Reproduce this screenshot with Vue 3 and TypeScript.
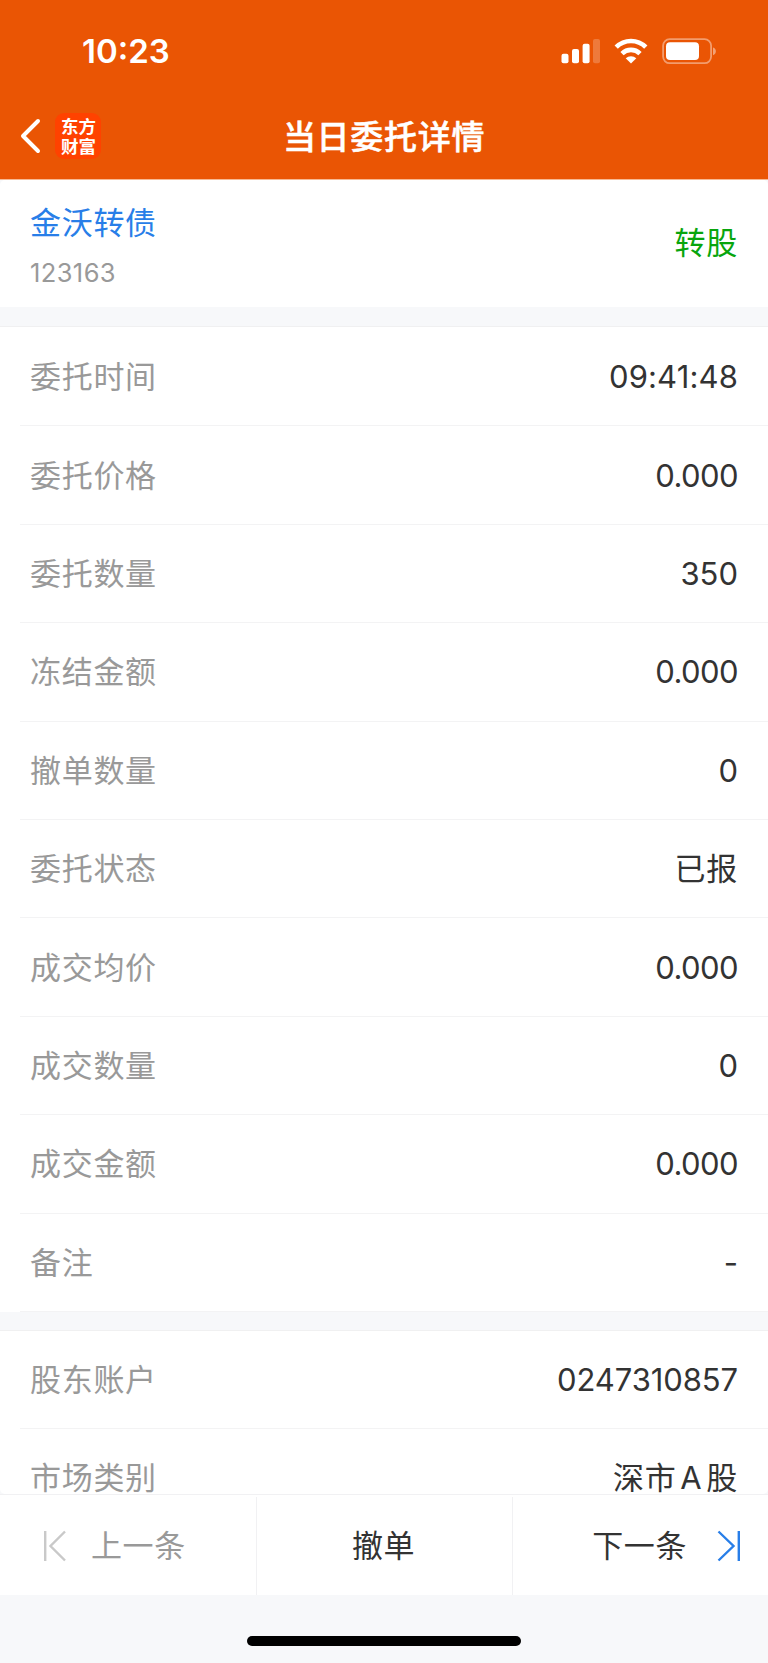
<script setup lang="ts">
interface DetailRow {
  label: string
  value: string
  kind: string
}

const orderRows: DetailRow[] = [
  { label: '委托时间', value: '09:41:48', kind: 'time' },
  { label: '委托价格', value: '0.000', kind: 'decimal' },
  { label: '委托数量', value: '350', kind: 'num' },
  { label: '冻结金额', value: '0.000', kind: 'decimal' },
  { label: '撤单数量', value: '0', kind: 'num' },
  { label: '委托状态', value: '已报', kind: 'cjk' },
  { label: '成交均价', value: '0.000', kind: 'decimal' },
  { label: '成交数量', value: '0', kind: 'num' },
  { label: '成交金额', value: '0.000', kind: 'decimal' },
  { label: '备注', value: '-', kind: 'dash' },
]

const accountRows: DetailRow[] = [
  { label: '股东账户', value: '0247310857', kind: 'account' },
  { label: '市场类别', value: '深市 A 股', kind: 'mixed' },
]
</script>

<template>
  <div class="screen">
    <header class="top">
      <div class="status">
        <span class="clock">10:23</span>
        <svg class="status-icons" width="158" height="30" viewBox="0 0 158 30">
          <g fill="#fff">
            <rect x="1.5" y="18.8" width="7" height="9.4" rx="2" />
            <rect x="12" y="14" width="7" height="14.2" rx="2" />
            <rect x="22.6" y="8.8" width="7" height="19.4" rx="2" />
            <rect x="33" y="4" width="7" height="24.2" rx="2" opacity="0.22" />
          </g>
          <g fill="none" stroke="#fff" stroke-width="4.6">
            <path d="M56.2 12.2a20.8 20.8 0 0 1 29.6 0" />
            <path d="M62 18.6a12.8 12.8 0 0 1 18 0" />
          </g>
          <path d="M71 28.6l-5.3-5.3a7.6 7.6 0 0 1 10.6 0z" fill="#fff" />
          <rect x="103.1" y="4.2" width="48" height="24" rx="6.6" fill="none" stroke="#fff" stroke-opacity="0.42" stroke-width="1.8" />
          <rect x="106" y="7.2" width="33" height="17.8" rx="4" fill="#fff" />
          <path d="M153 12.6c3.8 1 3.8 6.6 0 7.6z" fill="#fff" opacity="0.45" />
        </svg>
      </div>
      <div class="nav">
        <svg class="back" width="22" height="36" viewBox="0 0 22 36">
          <path d="M18 3L3 18l15 15" fill="none" stroke="#fff" stroke-width="4" stroke-linecap="round" stroke-linejoin="round" />
        </svg>
        <div class="logo"><span>东方</span><span>财富</span></div>
        <h1 class="title">当日委托详情</h1>
      </div>
    </header>

    <main class="content">
      <section class="stock">
        <div class="stock-info">
          <div class="stock-name">金沃转债</div>
          <div class="stock-code">123163</div>
        </div>
        <div class="side">转股</div>
      </section>

      <section class="group order">
        <div v-for="row in orderRows" :key="row.label" class="row">
          <span class="label">{{ row.label }}</span>
          <span class="value" :class="row.kind">{{ row.value }}</span>
        </div>
      </section>

      <section class="group account-group">
        <div v-for="row in accountRows" :key="row.label" class="row">
          <span class="label">{{ row.label }}</span>
          <span class="value" :class="row.kind">{{ row.value }}</span>
        </div>
      </section>
    </main>

    <nav class="actions">
      <button class="action prev" type="button">
        <svg width="24" height="32" viewBox="0 0 24 32">
          <path d="M2.2 1v30M22 1.5L7.5 16 22 30.5" fill="none" stroke="#c9c9c9" stroke-width="2.4" />
        </svg>
        <span>上一条</span>
      </button>
      <button class="action cancel" type="button"><span>撤单</span></button>
      <button class="action next" type="button">
        <span>下一条</span>
        <svg width="24" height="32" viewBox="0 0 24 32">
          <path d="M21.8 1v30M1.5 1.5L16.5 16 1.5 30.5" fill="none" stroke="#287ee8" stroke-width="2.4" />
        </svg>
      </button>
    </nav>
    <div class="home"><div class="home-bar"></div></div>
  </div>
</template>

<style>
body {
  margin: 0;
  background: #f7f8fa;
}
</style>

<style scoped>
.screen {
  width: 768px;
  height: 1663px;
  display: flex;
  flex-direction: column;
  overflow: hidden;
  background: #f7f8fa;
  font-family: Inter, "Noto Sans CJK SC", sans-serif;
  color: #333;
}
.top {
  flex: none;
  height: 179px;
  background: #ea5504;
  border-bottom: 1px solid #f7b993;
  color: #fff;
}
.status {
  height: 92px;
  display: flex;
  align-items: flex-start;
  justify-content: space-between;
  padding: 0 50px 0 82px;
}
.clock {
  margin-top: 31px;
  font-size: 33px;
  line-height: 40px;
  font-weight: 600;
}
.status-icons {
  margin-top: 35px;
}
.nav {
  height: 87px;
  display: grid;
  grid-template-columns: 55px 48px 562px 103px;
  align-items: center;
}
.back {
  margin: 1px 0 0 20px;
}
.logo {
  width: 46px;
  height: 46px;
  border-radius: 9px;
  background: #ff4200;
  display: flex;
  flex-direction: column;
  align-items: center;
  justify-content: center;
  font-family: "Noto Sans CJK SC", sans-serif;
  font-size: 17.5px;
  line-height: 19.4px;
  font-weight: 700;
}
.logo span {
  margin-left: 1px;
}
.title {
  margin: 2px 0 0;
  font-size: 33px;
  line-height: 48px;
  font-weight: 500;
  -webkit-text-stroke: 0.5px #fff;
  letter-spacing: 0.7px;
  text-align: center;
}
.content {
  flex: none;
  height: 1314px;
  overflow: hidden;
  border-radius: 5px;
}
.stock {
  box-sizing: border-box;
  height: 127px;
  padding: 0 30px;
  display: flex;
  align-items: center;
  justify-content: space-between;
  background: #fff;
}
.stock-info {
  padding-top: 2px;
}
.stock-name {
  font-size: 31px;
  line-height: 44px;
  letter-spacing: 0.7px;
  color: #287ee8;
}
.stock-code {
  margin-top: 12px;
  font-size: 25.5px;
  line-height: 32px;
  letter-spacing: 0.4px;
  color: #999;
}
.side {
  margin-top: -2px;
  font-size: 31px;
  line-height: 44px;
  letter-spacing: 0.7px;
  color: #08a50d;
}
.group {
  border-top: 1px solid #f0f0f1;
  background: #fff;
}
.order {
  margin-top: 19px;
  padding-top: 1px;
}
.account-group {
  margin-top: 18px;
}
.row {
  box-sizing: border-box;
  height: 98.4px;
  margin-left: 20px;
  padding: 1px 30px 0 10px;
  display: flex;
  align-items: center;
  justify-content: space-between;
  border-bottom: 1px solid #f3f3f4;
}
.label,
.value {
  font-size: 31px;
  line-height: 44px;
  letter-spacing: 0.7px;
}
.label {
  color: #999;
}
.value {
  color: #333;
}
.value.num,
.value.dash {
  letter-spacing: 0;
}
.value.time {
  letter-spacing: 0.15px;
}
.value.account {
  letter-spacing: -0.1px;
}
.value.decimal {
  letter-spacing: -0.55px;
}
.value.mixed {
  word-spacing: -5.5px;
}
.actions {
  flex: none;
  box-sizing: border-box;
  height: 101px;
  display: grid;
  grid-template-columns: 257px 256px 255px;
  padding-top: 2px;
  background: #fff;
  border-top: 1px solid #f1f1f3;
}
.action {
  border: 0;
  border-right: 1px solid #f1f1f3;
  margin: 0;
  padding: 0;
  background: none;
  display: flex;
  align-items: center;
  font-family: inherit;
  font-size: 31px;
  line-height: 44px;
  letter-spacing: 0.6px;
  color: #333;
}
.prev {
  padding-left: 43px;
  gap: 24px;
  color: #999;
}
.cancel {
  justify-content: center;
  padding-right: 2px;
}
.next {
  border-right: 0;
  justify-content: flex-end;
  padding-right: 27px;
  gap: 30px;
}
.home {
  flex: 1;
  display: flex;
  justify-content: center;
  align-items: flex-start;
  padding-top: 41px;
}
.home-bar {
  width: 274px;
  height: 10px;
  border-radius: 5px;
  background: #000;
}
</style>
